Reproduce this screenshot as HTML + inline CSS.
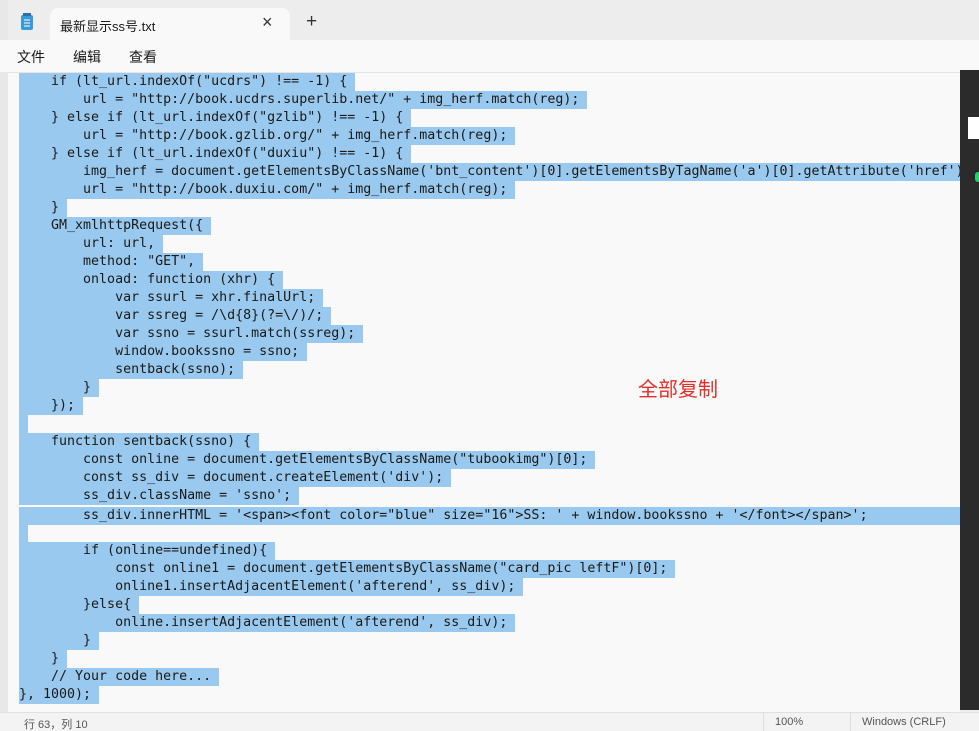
<!DOCTYPE html>
<html><head><meta charset="utf-8"><style>
*{margin:0;padding:0;box-sizing:border-box}
html,body{width:979px;height:731px;overflow:hidden}
body{background:#eeeeee;font-family:"Liberation Sans","Noto Sans CJK SC",sans-serif;position:relative}
.tabbar{position:absolute;left:0;top:0;width:979px;height:40px;background:#ededed}
.tab{position:absolute;left:50px;top:8px;width:240px;height:32px;background:#f9f9f9;border-radius:8px 8px 0 0;font-size:13px;color:#1a1a1a}
.menu{position:absolute;left:0;top:40px;width:979px;height:32px;background:#f9f9f9;font-size:14px;color:#1a1a1a}
.menu span{position:absolute;top:7px}
.ed{position:absolute;left:8px;top:72px;width:952px;height:640px;background:#f9f9f9;border-top:1px solid #e5e5e5}
.code{position:absolute;left:19px;top:73px;width:941px;height:637px;overflow:hidden;font-family:"DejaVu Sans Mono","Liberation Mono",monospace;font-size:13.3px;line-height:18px;color:#1a1a1a;white-space:normal}
.code div{height:18px;white-space:pre}
.code span{display:inline-block;height:18px;background:#99c9ef;padding-right:8px;vertical-align:top}
.code .e span{padding-right:9px}
.code .f{background:#99c9ef;width:941px}
.dark{position:absolute;left:960px;top:70px;width:19px;height:640px;background:#2b2b2b}
.status{position:absolute;left:0;top:712px;width:979px;height:19px;background:#f3f3f3;border-top:1px solid #e0e0e0;font-size:11px;color:#555}
.red{position:absolute;left:638px;top:373px;font-size:20px;color:#e0302a;font-family:"Noto Sans CJK SC",sans-serif}
</style></head><body>
<div class="tabbar"></div>
<div style="position:absolute;left:0;top:0;width:8px;height:731px;background:#e8e8e8"></div>
<div class="tab">
<svg style="position:absolute;left:-30px;top:5px" width="14" height="18" viewBox="0 0 14 18"><rect x="1" y="2" width="12" height="15" rx="2" fill="#3a9ad9"/><rect x="3" y="0" width="8" height="3" fill="#2a6fa8"/><path d="M4 7h6M4 10h6M4 13h6" stroke="#fff" stroke-width="1"/></svg>
<span style="position:absolute;left:10px;top:8px">最新显示ss号.txt</span>
<span style="position:absolute;left:212px;top:4px;font-size:18px;color:#333">×</span>
<span style="position:absolute;left:256px;top:3px;font-size:19px;color:#333">+</span>
</div>
<div class="menu"><span style="left:17px">文件</span><span style="left:73px">编辑</span><span style="left:129px">查看</span></div>
<div class="ed"></div>
<div class="code">
<div><span>    if (lt_url.indexOf("ucdrs") !== -1) {</span></div>
<div><span>        url = "http://book.ucdrs.superlib.net/" + img_herf.match(reg);</span></div>
<div><span>    } else if (lt_url.indexOf("gzlib") !== -1) {</span></div>
<div><span>        url = "http://book.gzlib.org/" + img_herf.match(reg);</span></div>
<div><span>    } else if (lt_url.indexOf("duxiu") !== -1) {</span></div>
<div><span>        img_herf = document.getElementsByClassName('bnt_content')[0].getElementsByTagName('a')[0].getAttribute('href');</span></div>
<div><span>        url = "http://book.duxiu.com/" + img_herf.match(reg);</span></div>
<div><span>    }</span></div>
<div><span>    GM_xmlhttpRequest({</span></div>
<div><span>        url: url,</span></div>
<div><span>        method: "GET",</span></div>
<div><span>        onload: function (xhr) {</span></div>
<div><span>            var ssurl = xhr.finalUrl;</span></div>
<div><span>            var ssreg = /\d{8}(?=\/)/;</span></div>
<div><span>            var ssno = ssurl.match(ssreg);</span></div>
<div><span>            window.bookssno = ssno;</span></div>
<div><span>            sentback(ssno);</span></div>
<div><span>        }</span></div>
<div><span>    });</span></div>
<div class="e"><span></span></div>
<div><span>    function sentback(ssno) {</span></div>
<div><span>        const online = document.getElementsByClassName("tubookimg")[0];</span></div>
<div><span>        const ss_div = document.createElement('div');</span></div>
<div><span>        ss_div.className = 'ssno';</span></div>
<div class="f" style="margin-top:2px">        ss_div.innerHTML = '&lt;span&gt;&lt;font color="blue" size="16"&gt;SS: ' + window.bookssno + '&lt;/font&gt;&lt;/span&gt;';</div>
<div class="e" style="margin-top:-1px"><span></span></div>
<div><span>        if (online==undefined){</span></div>
<div><span>            const online1 = document.getElementsByClassName("card_pic leftF")[0];</span></div>
<div><span>            online1.insertAdjacentElement('afterend', ss_div);</span></div>
<div><span>        }else{</span></div>
<div><span>            online.insertAdjacentElement('afterend', ss_div);</span></div>
<div><span>        }</span></div>
<div><span>    }</span></div>
<div><span>    // Your code here...</span></div>
<div><span>}, 1000);</span></div>
</div>
<div class="dark">
<div style="position:absolute;left:8px;top:47px;width:11px;height:22px;background:#fff"></div>
<div style="position:absolute;left:15px;top:102px;width:6px;height:10px;border-radius:5px;background:#2ecc71"></div>
</div>
<div class="red">全部复制</div>
<div class="status"><span style="position:absolute;left:24px;top:3px">行 63，列 10</span><span style="position:absolute;left:775px;top:3px">100%</span><span style="position:absolute;left:862px;top:3px">Windows (CRLF)</span>
<div style="position:absolute;left:763px;top:0;width:1px;height:19px;background:#ddd"></div><div style="position:absolute;left:850px;top:0;width:1px;height:19px;background:#ddd"></div></div>
</body></html>
